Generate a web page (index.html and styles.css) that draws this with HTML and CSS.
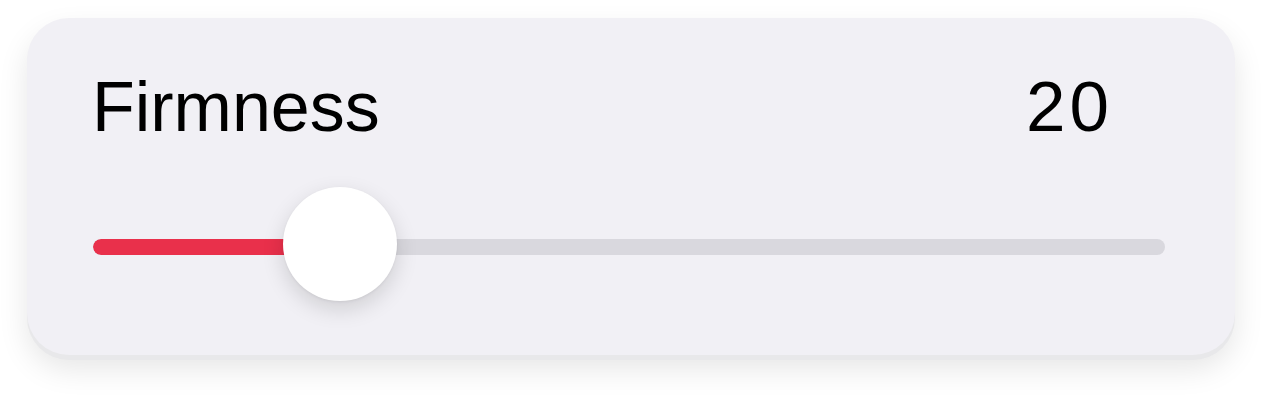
FILE: index.html
```html
<!DOCTYPE html>
<html lang="en">
<head>
<meta charset="utf-8">
<title>Firmness</title>
<link rel="stylesheet" href="styles.css">
</head>
<body>
<div class="card">
  <div class="header">
    <span class="label">Firmness</span>
    <span class="value">20</span>
  </div>
  <div class="slider">
    <div class="track">
      <div class="fill" style="width: 247px"></div>
    </div>
    <div class="thumb" style="left: 190px"></div>
  </div>
</div>
</body>
</html>
```
FILE: styles.css
```css
html, body {
  margin: 0;
  padding: 0;
  background: #ffffff;
}
body {
  padding: 18px 28px 41px 27px;
  font-family: "Liberation Sans", Arial, sans-serif;
}
.card {
  width: 1208px;
  box-sizing: border-box;
  height: 337px;
  background: #f1f0f5;
  border-radius: 42px;
  padding: 53px 70px 0 65px;
  box-shadow: 0 5px 0 #e8e8ea, 0 14px 30px rgba(0, 0, 0, 0.1);
}
.header {
  display: flex;
  justify-content: space-between;
  align-items: baseline;
  font-size: 70px;
  line-height: 71px;
  color: #000;
}
.value {
  font-size: 71px;
  letter-spacing: 4px;
  padding-right: 52px;
}
.slider {
  position: relative;
  margin-top: 44px;
  margin-left: 1px;
  height: 114px;
}
.track {
  position: relative;
  top: 52px;
  height: 16px;
  border-radius: 8px;
  background: #d9d8de;
  overflow: hidden;
}
.fill {
  height: 100%;
  background: #e9304b;
  border-radius: 8px;
}
.thumb {
  position: absolute;
  top: 0;
  width: 114px;
  height: 114px;
  border-radius: 50%;
  background: #ffffff;
  box-shadow: 0 8px 22px rgba(0, 0, 0, 0.14), 0 1px 3px rgba(0, 0, 0, 0.06);
}
```
